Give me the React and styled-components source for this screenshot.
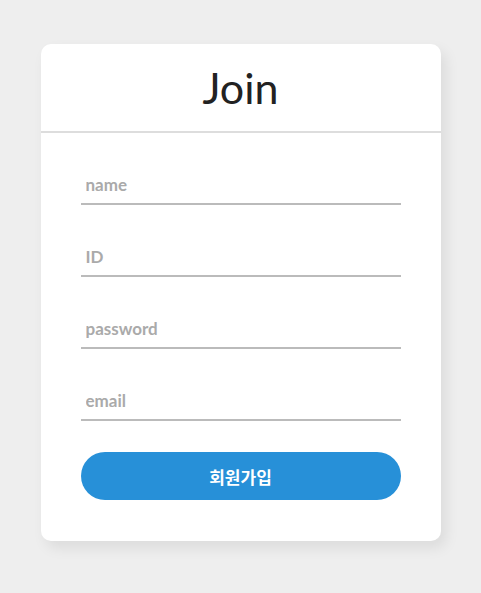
import styled, { createGlobalStyle } from "styled-components";

const Global = createGlobalStyle`
  body {
    margin: 0;
    background: #eeeeee;
    font-family: Lato, "Noto Sans CJK KR", sans-serif;
  }
`;

const Page = styled.div`
  display: flex;
  justify-content: center;
  align-items: flex-start;
  padding-top: 44px;
  min-height: 593px;
  box-sizing: border-box;
`;

const Card = styled.div`
  width: 400px;
  background: #fff;
  border-radius: 10px;
  box-shadow: 5px 7px 14px rgba(0, 0, 0, 0.08);
`;

const Header = styled.div`
  height: 87px;
  display: flex;
  align-items: center;
  justify-content: center;
  border-bottom: 2px solid #dddddd;
`;

const Title = styled.h1`
  margin: 0;
  font-family: Lato, sans-serif;
  font-size: 43px;
  font-weight: 400;
  color: #222;
`;

const Form = styled.form`
  display: flex;
  flex-direction: column;
  gap: 32px;
  padding: 32px 40px 41px;
`;

const Input = styled.input`
  height: 40px;
  box-sizing: border-box;
  border: none;
  border-bottom: 2px solid #bbbbbb;
  padding: 0 5px;
  font-family: Lato, sans-serif;
  font-size: 17px;
  font-weight: 700;
  outline: none;
  &::placeholder {
    color: #aaaaaa;
  }
`;

const Button = styled.button`
  height: 48px;
  border: none;
  border-radius: 24px;
  background: #2790d8;
  color: #fff;
  font-family: "Noto Sans CJK KR", sans-serif;
  font-size: 17px;
  font-weight: 700;
  margin-top: -1px;
  cursor: pointer;
`;

const fields = ["name", "ID", "password", "email"];

export default function App() {
  return (
    <>
      <Global />
      <Page>
        <Card>
          <Header>
            <Title>Join</Title>
          </Header>
          <Form onSubmit={(e) => e.preventDefault()}>
            {fields.map((f) => (
              <Input
                key={f}
                placeholder={f}
                type={f === "password" ? "password" : "text"}
              />
            ))}
            <Button type="submit">회원가입</Button>
          </Form>
        </Card>
      </Page>
    </>
  );
}
